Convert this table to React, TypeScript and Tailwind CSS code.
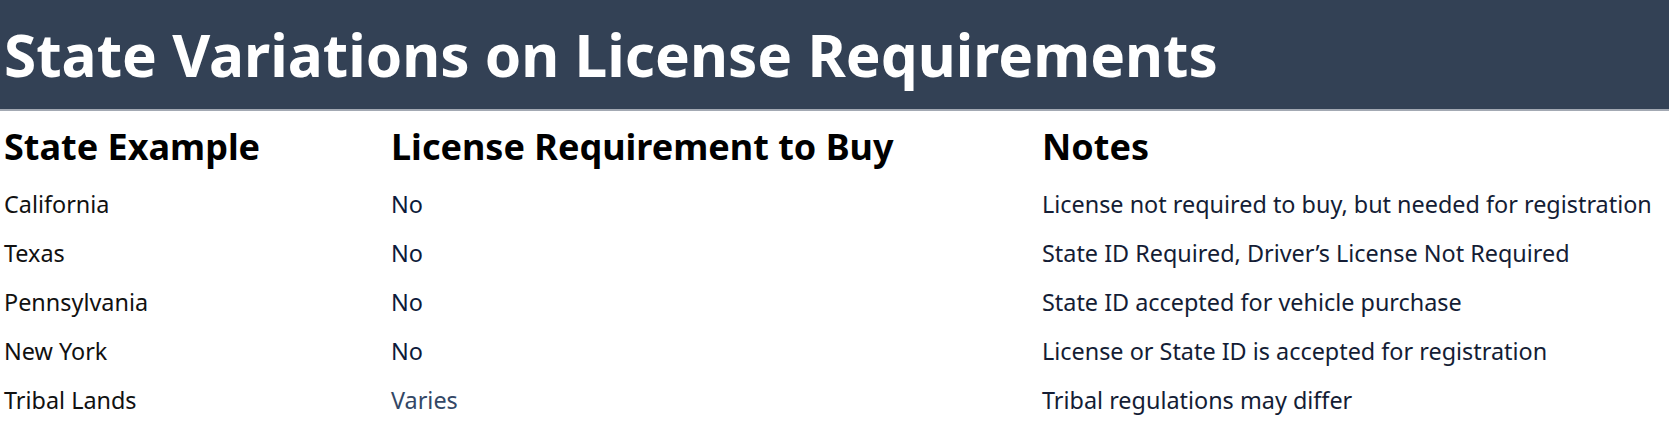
import React from "react";

const rows: { state: string; req: string; notes: string; varies?: boolean }[] = [
  { state: "California", req: "No", notes: "License not required to buy, but needed for registration" },
  { state: "Texas", req: "No", notes: "State ID Required, Driver\u2019s License Not Required" },
  { state: "Pennsylvania", req: "No", notes: "State ID accepted for vehicle purchase" },
  { state: "New York", req: "No", notes: "License or State ID is accepted for registration" },
  { state: "Tribal Lands", req: "Varies", notes: "Tribal regulations may differ", varies: true },
];

export default function App() {
  return (
    <div className="w-[1669px] h-[438px] bg-white overflow-hidden" style={{ fontFamily: "'Noto Sans', Roboto, sans-serif" }}>
      <div className="h-[111px] bg-[#334155] flex items-center pl-[4px] border-b-2 border-[#a3a9b3]">
        <h1 className="text-[58.5px] font-bold text-white leading-none">State Variations on License Requirements</h1>
      </div>
      <div className="grid grid-cols-[391px_651px_1fr]">
        <div className="h-[69px] pt-[3px] flex items-center pl-[4px] text-[36px] font-bold text-black">State Example</div>
        <div className="h-[69px] pt-[3px] flex items-center text-[36px] font-bold text-black">License Requirement to Buy</div>
        <div className="h-[69px] pt-[3px] flex items-center text-[36px] font-bold text-black">Notes</div>
        {rows.map((r) => (
          <React.Fragment key={r.state}>
            <div className="h-[49px] flex items-center pl-[4px] text-[23.4px] text-[#111111]">{r.state}</div>
            <div className={`h-[49px] flex items-center text-[23.4px] ${r.varies ? "text-[#334766]" : "text-[#0c1a3a]"}`}>{r.req}</div>
            <div className="h-[49px] flex items-center text-[23.4px] text-[#141d35]">{r.notes}</div>
          </React.Fragment>
        ))}
      </div>
    </div>
  );
}
